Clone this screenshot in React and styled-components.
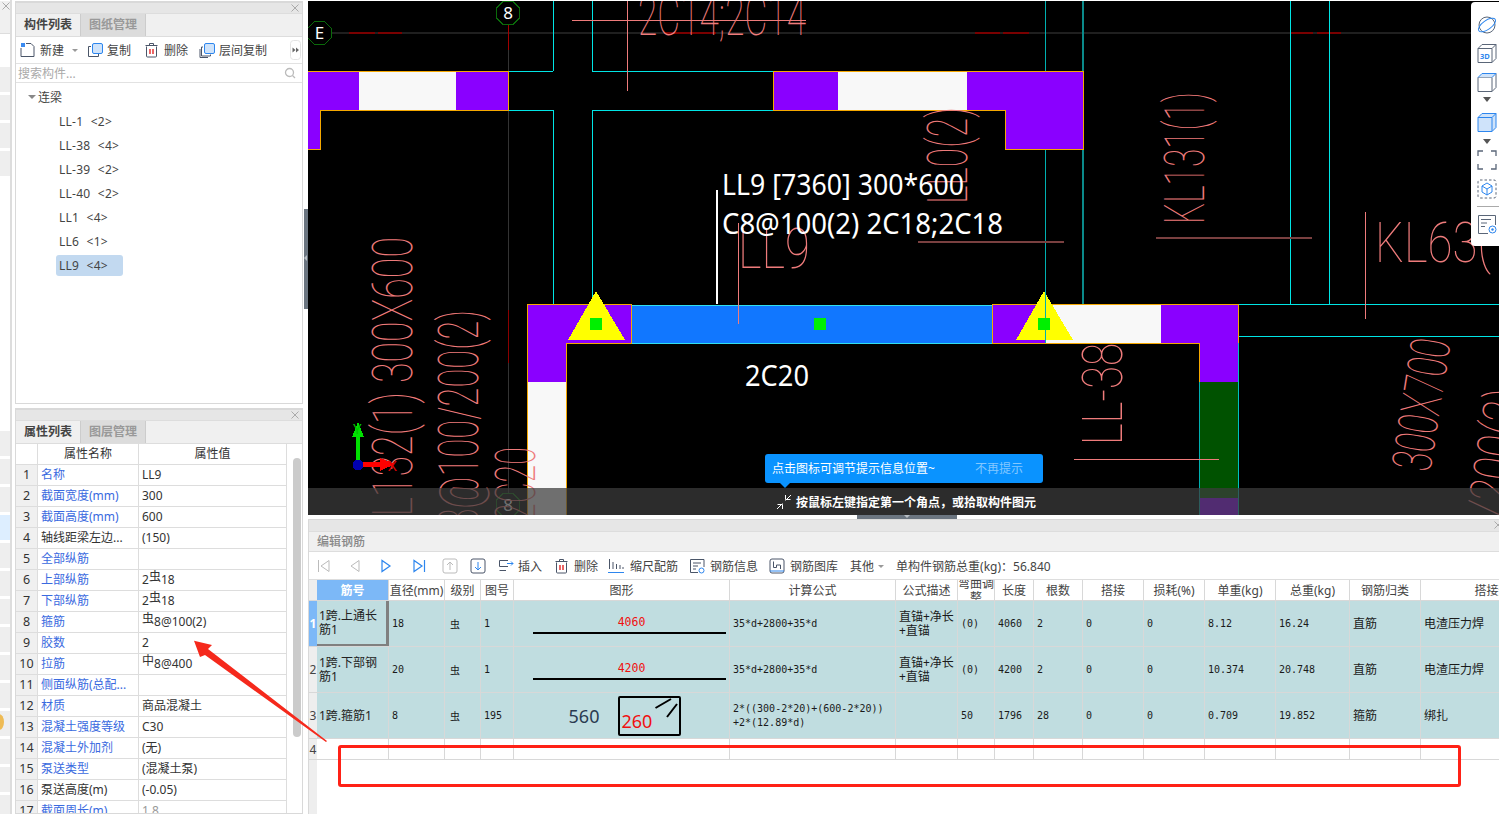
import React from 'react';
import styled, { createGlobalStyle } from 'styled-components';

const UI = '"Noto Sans", "Noto Sans CJK SC", sans-serif';
const MONO = '"DejaVu Sans Mono", "Noto Sans CJK SC", monospace';
const COLS = '8px 72px 56px 36px 33px 216px 166px 62px 37px 39px 49px 61px 61px 71px 74px 71px 156px';

const Global = createGlobalStyle`
  html, body { margin: 0; padding: 0; background: #fff; overflow: hidden; }
  * { box-sizing: border-box; }
`;

const Page = styled.div`
  width: 1499px;
  height: 814px;
  display: flex;
  position: relative;
  overflow: hidden;
  font-family: ${UI};
  font-size: 12px;
  color: #333;
  background: #fff;
`;

// slice of the neighbouring panel on the far left
const Strip = styled.div`
  width: 15px;
  flex: none;
  padding-right: 3px;
  display: flex;
  flex-direction: column;
`;
const StripInner = styled.div`
  flex: 1;
  border-right: 2px solid #ddd;
  overflow: hidden;
`;
const StripHead = styled.div`
  height: 33px;
  margin-top: 1px;
  background: #f0f0f0;
  border-bottom: 1px solid #ddd;
  position: relative;
  margin-bottom: 33px;
`;
const StripRow = styled.div`
  height: 25px;
  margin-bottom: 3px;
  position: relative;
  background: ${p => (p.$on ? '#ddeeff' : '#eeeeee')};
`;
const StripGap = styled.div`
  height: ${p => p.$h}px;
`;
const StripDot = styled.div`
  position: absolute;
  left: -6px;
  top: 3px;
  width: 10px;
  height: 16px;
  border-radius: 50%;
  background: #eebb55;
`;

const Side = styled.div`
  width: 289px;
  flex: none;
  display: flex;
  flex-direction: column;
  gap: 4px;
`;
const Panel = styled.div`
  border: 1px solid #d9d9d9;
  border-top-width: 2px;
  display: flex;
  flex-direction: column;
  height: ${p => p.$h}px;
  margin-top: ${p => p.$mt || 0}px;
  margin-right: 1px;
  overflow: hidden;
  background: #fff;
`;
const PanelGrip = styled.div`
  height: 10px;
  flex: none;
  background: #e6e6e6;
  position: relative;
`;
const CloseSvg = styled.svg`
  position: absolute;
  right: ${p => p.$right}px;
  top: 1px;
  width: 8px;
  height: 8px;
`;
const TabRow = styled.div`
  height: 24px;
  flex: none;
  display: flex;
  background: #f0f0f0;
  border-top: 1px solid #ddd;
  border-bottom: 1px solid #ddd;
`;
const Tab = styled.div`
  width: 65px;
  text-align: center;
  font-weight: 700;
  line-height: 22px;
  color: ${p => (p.$on ? '#444' : '#999')};
  background: ${p => (p.$on ? '#f0f0f0' : '#dcdcdc')};
  border-right: 1px solid #ccc;
`;
const ToolRow = styled.div`
  height: 27px;
  flex: none;
  display: flex;
  align-items: center;
  padding-left: 4px;
  gap: 4px;
  border-bottom: 1px solid #e2e2e2;
  position: relative;
  white-space: nowrap;
`;
const ToolLabel = styled.span`
  margin-right: ${p => p.$mr || 0}px;
  color: #444;
`;
const TinyCaret = styled.span`
  width: 0;
  height: 0;
  border: 3px solid transparent;
  border-top: 3px solid #999;
  margin: 3px ${p => p.$mr || 0}px 0 4px;
`;
const MoreBtn = styled.svg`
  position: absolute;
  right: 1px;
  top: 3px;
  width: 11px;
  height: 20px;
`;
const Search = styled.div`
  height: 19px;
  flex: none;
  display: flex;
  align-items: center;
  justify-content: space-between;
  padding: 0 6px 0 2px;
  color: #aaa;
  border-bottom: 1px solid #e2e2e2;
`;
const Tree = styled.div`
  flex: 1;
  padding-top: 2px;
`;
const TreeRow = styled.div`
  height: 24px;
  display: flex;
  align-items: center;
  padding-left: ${p => p.$indent}px;
  color: #444;
`;
const TreeCaret = styled.span`
  width: 0;
  height: 0;
  border: 4px solid transparent;
  border-top: 4px solid #888;
  margin: 4px 2px 0 0;
`;
const TreeItem = styled.span`
  padding: 0 10px 0 3px;
  height: 21px;
  line-height: 21px;
  min-width: 67px;
  border-radius: 3px;
  word-spacing: 4px;
  letter-spacing: 0.25px;
  font-size: 12px;
  background: ${p => (p.$on ? '#c2d9f0' : 'transparent')};
`;

const PropWrap = styled.div`
  flex: 1;
  display: flex;
  overflow: hidden;
`;
const PropTable = styled.div`
  width: 271px;
  flex: none;
`;
const PropRow = styled.div`
  display: grid;
  grid-template-columns: 22px 101px 148px;
  height: 21px;
  border-bottom: 1px solid #ddd;
  border-right: 1px solid #ddd;
  line-height: 20px;
`;
const PropNum = styled.div`
  background: #f0f0f0;
  text-align: center;
  border-right: 1px solid #ddd;
  font-size: 12.5px;
`;
const PropName = styled.div`
  padding-left: 3px;
  border-right: 1px solid #ddd;
  white-space: nowrap;
  overflow: hidden;
  color: ${p => (p.$blue ? '#3a6ae0' : '#333')};
`;
const PropVal = styled.div`
  padding-left: 3px;
  white-space: nowrap;
  color: ${p => (p.$muted ? '#999' : '#333')};
`;
const PropHead = styled.div`
  text-align: center;
  border-right: 1px solid #ddd;
`;
const Sym = styled.span`
  font-size: 12px;
  position: relative;
  top: -3px;
`;
const ScrollThumb = styled.div`
  width: 8px;
  height: 279px;
  margin: 14px 0 0 6px;
  border-radius: 4px;
  background: #cbcbcb;
`;

const Gutter = styled.div`
  width: 4px;
  flex: none;
  padding-top: 209px;
`;
const GutterHandle = styled.div`
  height: 100px;
  background: #6b7580;
  position: relative;
  &::after {
    content: '';
    position: absolute;
    left: 0;
    top: 46px;
    border: 3px solid transparent;
    border-right: 3px solid #b8bec4;
    border-left: 0;
  }
`;

const Main = styled.div`
  flex: 1;
  min-width: 0;
  display: flex;
  flex-direction: column;
`;
const Canvas = styled.div`
  height: 514px;
  margin-top: 1px;
  flex: none;
  position: relative;
  background: #000;
  overflow: hidden;
`;
const CanvasSvg = styled.svg`
  display: block;
  width: 1191px;
  height: 514px;
  shape-rendering: crispEdges;
`;
const Cad = styled.text`
  font-family: Roboto, "Liberation Sans", sans-serif;
  font-weight: 100;
  fill: #ee7b7b;
`;
const Note = styled.text`
  font-family: "Noto Sans", sans-serif;
  fill: #fff;
  font-size: 29px;
`;
const AxisLabel = styled.text`
  font-family: "Noto Sans", sans-serif;
  font-size: 15px;
`;
const Hint = styled.div`
  position: absolute;
  left: 457px;
  top: 453px;
  width: 278px;
  height: 29px;
  padding: 0 0 0 7px;
  border-radius: 3px;
  background: #0a93ff;
  color: #fff;
  line-height: 29px;
  display: flex;
  justify-content: space-between;
  &::after {
    content: '';
    position: absolute;
    left: 15px;
    top: 29px;
    border: 5px solid transparent;
    border-top: 5px solid #0a93ff;
    border-bottom: 0;
  }
`;
const HintOff = styled.span`
  width: 68px;
  color: #84c8ff;
`;
const StatusBar = styled.div`
  position: absolute;
  left: 0;
  right: 0;
  bottom: 0;
  height: 27px;
  background: rgba(60, 60, 60, 0.73);
  color: #fff;
  font-weight: 700;
  display: flex;
  align-items: center;
  padding-left: 468px;
  gap: 4px;
`;
const SideTools = styled.div`
  position: absolute;
  right: 0;
  top: 1px;
  width: 28px;
  height: 244px;
  background: #fff;
  border-radius: 4px 0 0 4px;
  display: flex;
  flex-direction: column;
  align-items: flex-start;
  padding: 13px 0 0 6px;
`;
const SideCaret = styled.span`
  width: 0;
  height: 0;
  margin: ${p => p.$mt}px 0 ${p => p.$mb}px 6px;
  border: 4px solid transparent;
  border-top: 5px solid #555;
  border-bottom: 0;
`;
const SideRule = styled.div`
  width: 22px;
  height: 1px;
  margin: 7px 0;
  background: #aaa;
`;
const SideIcon = styled.svg`
  width: 20px;
  height: 20px;
  margin-bottom: ${p => p.$mb || 0}px;
  fill: none;
  flex: none;
`;

const SplitBar = styled.div`
  height: 4px;
  flex: none;
  padding-left: 549px;
`;
const SplitHandle = styled.div`
  width: 100px;
  height: 4px;
  background: #6b7580;
  position: relative;
  &::after {
    content: '';
    position: absolute;
    left: 47px;
    top: 0;
    border: 3px solid transparent;
    border-top: 3px solid #b8bec4;
    border-bottom: 0;
  }
`;
const Editor = styled.div`
  flex: 1;
  display: flex;
  flex-direction: column;
  border-top: 1px solid #d9d9d9;
  border-left: 1px solid #d9d9d9;
  overflow: hidden;
`;
const EditorGrip = styled.div`
  height: 11px;
  flex: none;
  background: #e6e6e6;
  position: relative;
`;
const EditorTitle = styled.div`
  height: 21px;
  flex: none;
  background: #f0f0f0;
  border-top: 1px solid #ddd;
  border-bottom: 1px solid #ddd;
  line-height: 20px;
  padding-left: 8px;
  color: #888;
  font-weight: 500;
`;
const EditorTools = styled.div`
  height: 28px;
  flex: none;
  display: flex;
  align-items: center;
  padding: 1px 0 0 7px;
  white-space: nowrap;
  border-bottom: 1px solid #ddd;
  color: #444;
`;
const EdIcon = styled.svg`
  width: ${p => p.$w || 16}px;
  height: 16px;
  margin-right: ${p => p.$mr || 0}px;
  fill: none;
  flex: none;
`;
const EdLabel = styled.span`
  margin: 0 ${p => p.$mr || 0}px 0 ${p => p.$ml || 0}px;
`;
const Rebar = styled.div`
  flex: 1;
  display: flex;
  flex-direction: column;
  width: 1268px;
`;
const GridRow = styled.div`
  display: grid;
  grid-template-columns: ${COLS};
  height: ${p => p.$h}px;
  flex: none;
  background: ${p => p.$bg || '#fff'};
  border-bottom: 1px solid #d8d8d8;
`;
const HeadCell = styled.div`
  display: flex;
  align-items: center;
  justify-content: center;
  text-align: center;
  overflow: hidden;
  padding-top: 2px;
  line-height: 14px;
  border-right: 1px solid #d8d8d8;
  color: ${p => (p.$active ? '#fff' : '#444')};
  background: ${p => (p.$active ? '#7cb8f7' : 'transparent')};
  font-weight: ${p => (p.$active ? 700 : 400)};
`;
const NumCell = styled.div`
  background: ${p => (p.$on ? '#7cb8f7' : '#eeeeee')};
  color: ${p => (p.$on ? '#fff' : '#444')};
  font-weight: ${p => (p.$on ? 700 : 400)};
  display: flex;
  align-items: center;
  justify-content: center;
  overflow: hidden;
  font-size: 12px;
`;
const NameCell = styled.div`
  padding: 0 6px 0 2px;
  display: flex;
  align-items: center;
  line-height: 14px;
  color: #222;
  border-right: ${p => (p.$on ? '3px solid #808080' : '1px solid #d8d8d8')};
  border-bottom: ${p => (p.$on ? '2px solid #808080' : 'none')};
`;
const DataCell = styled.div`
  display: flex;
  align-items: center;
  padding-left: 3px;
  overflow: hidden;
  white-space: ${p => (p.$wrap ? 'pre-line' : 'nowrap')};
  line-height: 14px;
  font-family: ${p => (p.$ui ? UI : MONO)};
  font-size: ${p => (p.$ui ? 12 : 10)}px;
  color: #1a1a1a;
  border-right: 1px solid #d8d8d8;
`;
const GradeCell = styled.div`
  display: flex;
  align-items: center;
  padding-left: 5px;
  font-size: 10px;
  color: #1a1a1a;
  border-right: 1px solid #d8d8d8;
`;
const ShapeCell = styled.div`
  border-right: 1px solid #d8d8d8;
  display: flex;
  flex-direction: column;
  align-items: center;
  justify-content: center;
  font-family: ${MONO};
`;
const BarLabel = styled.div`
  color: #f01010;
  font-size: 11.5px;
  line-height: 14px;
  padding-top: 2px;
  height: 16px;
  margin-left: 20px;
`;
const BarLine = styled.div`
  width: 193px;
  height: 2px;
  margin: 3px 0 0 15px;
  background: #000;
`;
const StirrupRow = styled.div`
  display: flex;
  align-items: center;
  gap: 19px;
  margin-left: 7px;
`;
const StirrupSide = styled.span`
  font-family: ${UI};
  font-size: 18px;
  color: #2a3a50;
`;
const StirrupBox = styled.div`
  width: 63px;
  height: 40px;
  border: 2px solid #000;
  border-radius: 2px;
  position: relative;
  font-family: ${UI};
  font-size: 18px;
  color: #f01010;
  line-height: 20px;
  padding: 13px 0 0 1px;
`;
const StirrupHook = styled.svg`
  position: absolute;
  right: 1px;
  top: 0;
  width: 30px;
  height: 24px;
`;
const GutterFill = styled.div`
  flex: 1;
  width: 8px;
  background: #eeeeee;
`;

// red annotations someone drew over the screenshot
const MarkBox = styled.div`
  position: absolute;
  left: 338px;
  top: 745px;
  width: 1123px;
  height: 42px;
  border: 3px solid #ff2116;
  border-radius: 3px;
`;
const MarkArrow = styled.svg`
  position: absolute;
  left: 180px;
  top: 630px;
  width: 160px;
  height: 120px;
`;

const rectFill = [
  ['#8a00ff', 0, 70, 51, 39], ['#f8f8f8', 51, 70, 97, 39], ['#8a00ff', 148, 70, 52, 39], ['#8a00ff', 0, 109, 12, 39],
  ['#8a00ff', 465, 70, 65, 39], ['#f8f8f8', 530, 70, 129, 39], ['#8a00ff', 659, 70, 116, 39], ['#8a00ff', 697, 109, 78, 39],
  ['#8a00ff', 219, 303, 104, 39], ['#8a00ff', 219, 342, 39, 39], ['#f8f8f8', 219, 381, 39, 133],
  ['#8a00ff', 684, 303, 53, 39], ['#f8f8f8', 737, 303, 116, 39], ['#8a00ff', 853, 303, 77, 39], ['#8a00ff', 891, 342, 39, 39],
  ['#005200', 891, 381, 39, 116], ['#8a00ff', 891, 497, 39, 17]
];
const outlines = [
  '-2,70 200,70 200,109 12,109 12,148 -2,148',
  '465,70 775,70 775,148 697,148 697,109 465,109',
  '219,514 219,303 323,303 323,342 258,342 258,514',
  '684,342 684,303 930,303 930,514 891,514 891,342'
];
const cyanLines = [
  [245, 0, 245, 70], [284, 0, 284, 70], [245, 109, 245, 304], [284, 109, 284, 304],
  [200, 70, 245, 70], [284, 70, 465, 70], [200, 109, 245, 109], [284, 109, 465, 109],
  [982, 0, 982, 303], [1021, 0, 1021, 303], [931, 303, 1191, 303], [931, 335, 1191, 335]
];
const pinkLines = [
  [264, 19, 498, 19], [319, 0, 319, 90], [430, 222, 430, 323], [1057, 211, 1057, 318],
  [766, 458, 911, 458], [730, 241, 756, 241]
];
const brownLines = [[610, 241, 756, 241], [848, 237, 1004, 237]];
const redDashes = [[41, 67], [70, 94], [356, 408], [667, 692], [695, 721], [982, 1005], [1009, 1033]];

function CadLabel({ x, y, angle = 0, size = 55, len, children }) {
  return (
    <Cad
      transform={`translate(${x} ${y}) rotate(${angle})`}
      fontSize={size}
      textLength={len}
      lengthAdjust="spacingAndGlyphs"
    >
      {children}
    </Cad>
  );
}

function AxisMark({ cx, cy, label, color = '#fff' }) {
  const pts = [];
  for (let i = 0; i < 8; i++) {
    const a = (Math.PI / 4) * i + Math.PI / 8;
    pts.push(`${cx + 12.5 * Math.cos(a)},${cy + 12.5 * Math.sin(a)}`);
  }
  return (
    <g>
      <polygon points={pts.join(' ')} fill="#000" stroke="#0a6a0a" strokeWidth="1" />
      <text x={cx} y={cy + 6} textAnchor="middle" fontFamily="Noto Sans, sans-serif" fontSize="17" fill={color}>
        {label}
      </text>
    </g>
  );
}

function Drawing() {
  return (
    <CanvasSvg viewBox="0 0 1191 514">
      <line x1="23" y1="32" x2="1191" y2="32" stroke="#1f1f1f" strokeWidth="2" />
      {redDashes.map(([a, b]) => (
        <line key={a} x1={a} y1="32" x2={b} y2="32" stroke="#7a0000" strokeWidth="2" />
      ))}
      <line x1="200" y1="49" x2="200" y2="514" stroke="#333" />
      <line x1="200" y1="24" x2="200" y2="49" stroke="#a00000" />
      <line x1="200" y1="309" x2="200" y2="362" stroke="#8a0000" />
      {cyanLines.map(([x1, y1, x2, y2], i) => (
        <line key={i} x1={x1} y1={y1} x2={x2} y2={y2} stroke="#00e5e5" />
      ))}
      <line x1="737" y1="0" x2="737" y2="70" stroke="#00b0b0" />
      <line x1="737" y1="148" x2="737" y2="304" stroke="#00b0b0" />
      <line x1="775" y1="0" x2="775" y2="70" stroke="#0a8a8a" strokeWidth="2" />
      <line x1="775" y1="148" x2="775" y2="304" stroke="#0a8a8a" strokeWidth="2" />

      {rectFill.map(([c, x, y, w, h], i) => (
        <rect key={i} fill={c} x={x} y={y} width={w} height={h} />
      ))}
      <rect x="323" y="304" width="361" height="38" fill="#1177ff" stroke="#30e0f0" />
      {outlines.map(p => (
        <polygon key={p} points={p} fill="none" stroke="#f5a800" />
      ))}
      <line x1="930" y1="342" x2="930" y2="514" stroke="#00c0c0" />
      <line x1="891" y1="381" x2="891" y2="514" stroke="#00b0b0" />

      <AxisMark cx={11.5} cy={32} label="E" />
      <AxisMark cx={200} cy={12} label="8" />
      <AxisMark cx={200} cy={504} label="8" />

      {pinkLines.map(([x1, y1, x2, y2], i) => (
        <line key={i} x1={x1} y1={y1} x2={x2} y2={y2} stroke="#ee7b7b" />
      ))}
      {brownLines.map(([x1, y1, x2, y2]) => (
        <line key={x1} x1={x1} y1={y1} x2={x2} y2={y2} stroke="#7a4040" strokeWidth="2" />
      ))}

      <CadLabel x={330} y={34} len={168}>2C14;2C14</CadLabel>
      <CadLabel x={104} y={535} angle={-90} len={299}>LL132(1) 300X600</CadLabel>
      <CadLabel x={170} y={549} angle={-90} len={240}>C8@100/200(2)</CadLabel>
      <CadLabel x={227} y={520} angle={-90} len={74}>2C20</CadLabel>
      <CadLabel x={430} y={267} len={72}>LL9</CadLabel>
      <CadLabel x={659} y={203} angle={-90} len={97}>LL0(2)</CadLabel>
      <CadLabel x={896} y={223} angle={-90} len={132}>KL131(1)</CadLabel>
      <CadLabel x={814} y={444} angle={-90} len={102}>LL-38</CadLabel>
      <CadLabel x={1067} y={261} len={155}>KL63(1)</CadLabel>
      <CadLabel x={1122} y={472} angle={-81} len={133}>300X700</CadLabel>
      <CadLabel x={1197} y={519} angle={-81} len={130}>/200(2)</CadLabel>

      <polygon points="288,290 260,339 317,339" fill="#ffff00" />
      <polygon points="736,290 708,339 765,339" fill="#ffff00" />
      <line x1="737" y1="290" x2="737" y2="342" stroke="#00b0b0" />
      <rect x="282" y="317" width="12" height="12" fill="#00f000" />
      <rect x="506" y="317" width="12" height="12" fill="#00f000" />
      <rect x="730" y="317" width="12" height="12" fill="#00f000" />

      <line x1="409" y1="189" x2="409" y2="303" stroke="#fff" strokeWidth="2" />
      <Note x="414" y="194" textLength="242" lengthAdjust="spacingAndGlyphs">LL9 [7360] 300*600</Note>
      <Note x="414" y="233" textLength="281" lengthAdjust="spacingAndGlyphs">C8@100(2) 2C18;2C18</Note>
      <Note x="437" y="385" textLength="64" lengthAdjust="spacingAndGlyphs">2C20</Note>

      <rect x="48" y="435" width="4" height="24" fill="#00e000" />
      <polygon points="50,421 44,436 56,436" fill="#00e000" />
      <AxisLabel x="45" y="433" fill="#00c000" fontSize="12">Y</AxisLabel>
      <rect x="54" y="461" width="20" height="5" fill="#ff0000" />
      <polygon points="87,463 72,457 72,470" fill="#ff0000" />
      <AxisLabel x="80" y="470" fill="#e00000">X</AxisLabel>
      <circle cx="50" cy="464" r="5.5" fill="#0000b0" />
    </CanvasSvg>
  );
}

const CloseIcon = ({ right = 3 }) => (
  <CloseSvg viewBox="0 0 8 8" $right={right}>
    <path d="M0.5 0.5l7 7M7.5 0.5l-7 7" stroke="#aaa" fill="none" />
  </CloseSvg>
);
const NewIcon = () => (
  <EdIcon viewBox="0 0 16 16" $w={16}>
    <rect x="1" y="1" width="4" height="4" fill="#3b8bf0" />
    <path d="M1 6v8.5h13V4.5L11 1.5H6" stroke="#4a5568" />
  </EdIcon>
);
const CopyIcon = () => (
  <EdIcon viewBox="0 0 16 16">
    <rect x="5.5" y="1.5" width="10" height="10" rx="1.5" fill="#cfe3fa" stroke="#2d86ee" />
    <path d="M4 4.5H1.5v10h10V12" stroke="#4a5568" />
  </EdIcon>
);
const TrashIcon = () => (
  <EdIcon viewBox="0 0 16 16">
    <path d="M2.5 4.5v9.5a1 1 0 0 0 1 1h8a1 1 0 0 0 1-1V4.5M1.5 3.5h12M5.5 3V1.5h4V3" stroke="#4a5568" />
    <path d="M6 7v5M9 7v5" stroke="#e01515" strokeWidth="1.3" />
  </EdIcon>
);
const FloorCopyIcon = () => (
  <EdIcon viewBox="0 0 16 16">
    <rect x="5.5" y="1.5" width="10" height="10" rx="1.5" fill="#cfe3fa" stroke="#2d86ee" />
    <path d="M4 5H2.5v9h9v-1.5M1 7v8.5h8" stroke="#4a5568" />
  </EdIcon>
);
const GlassIcon = () => (
  <EdIcon viewBox="0 0 12 12" $w={12}>
    <circle cx="5.5" cy="5.5" r="4" stroke="#bbb" strokeWidth="1.3" />
    <path d="M8.5 8.5L11 11" stroke="#bbb" strokeWidth="1.3" />
  </EdIcon>
);

const SideIcons = () => (
  <SideTools>
    <SideIcon viewBox="0 0 20 20" $mb={8}>
      <circle cx="10" cy="10" r="8" stroke="#5a6678" />
      <ellipse cx="10" cy="10" rx="10" ry="4.5" transform="rotate(-35 10 10)" stroke="#2d86ee" />
    </SideIcon>
    <SideIcon viewBox="0 0 20 20" $mb={9}>
      <path d="M1 5.5L5 1.5h14v14l-4 4H1zM1 5.5h14v14M15 5.5l4-4" stroke="#5a6678" />
      <text x="3" y="16" fontSize="7.5" fontWeight="700" fontFamily="Noto Sans, sans-serif" fill="#2d86ee">3D</text>
    </SideIcon>
    <SideIcon viewBox="0 0 20 20">
      <path d="M1 19.5v-14h14v14zM15 19.5l4-4v-14" stroke="#5a6678" />
      <path d="M1 5.5l4-4h14l-4 4" fill="#cfe3fa" stroke="#2d86ee" />
    </SideIcon>
    <SideCaret $mt={5} $mb={10} />
    <SideIcon viewBox="0 0 20 20">
      <path d="M1 5.5l4-4h14v14l-4 4H1z" fill="#cfe3fa" stroke="#2d86ee" />
      <path d="M1 5.5h14v14M15 5.5l4-4" stroke="#2d86ee" />
    </SideIcon>
    <SideCaret $mt={7} $mb={6} />
    <SideIcon viewBox="0 0 20 20" $mb={9}>
      <path d="M1 6V1h5M14 1h5v5M19 14v5h-5M6 19H1v-5" stroke="#5a6678" strokeWidth="1.3" />
    </SideIcon>
    <SideIcon viewBox="0 0 20 20">
      <rect x="1" y="1" width="18" height="18" rx="2" stroke="#5a6678" strokeDasharray="2.5 2" />
      <path d="M10 4l5 3v6l-5 3-5-3V7zM5 7l5 3 5-3M10 10v6" stroke="#2d86ee" />
    </SideIcon>
    <SideRule />
    <SideIcon viewBox="0 0 20 20">
      <path d="M18.5 11V1.5h-17v18H11" stroke="#5a6678" />
      <path d="M4 5.5h10M4 9h6M4 12.5h4" stroke="#5a6678" />
      <circle cx="15.5" cy="15.5" r="3.5" stroke="#2d86ee" />
      <circle cx="15.5" cy="15.5" r="1.2" fill="#2d86ee" />
    </SideIcon>
  </SideTools>
);

const C = () => <Sym>虫</Sym>;
const Z = () => <Sym>中</Sym>;

const props = [
  ['名称', 'LL9', 1], ['截面宽度(mm)', '300', 1], ['截面高度(mm)', '600', 1], ['轴线距梁左边...', '(150)', 0],
  ['全部纵筋', '', 1], ['上部纵筋', <>2<C />18</>, 1], ['下部纵筋', <>2<C />18</>, 1], ['箍筋', <><C />8@100(2)</>, 1],
  ['胶数', '2', 1], ['拉筋', <><Z />8@400</>, 1], ['侧面纵筋(总配...', '', 1], ['材质', '商品混凝土', 1],
  ['混凝土强度等级', 'C30', 1], ['混凝土外加剂', '(无)', 1], ['泵送类型', '(混凝土泵)', 1], ['泵送高度(m)', '(-0.05)', 0],
  ['截面周长(m)', '1.8', 1]
];
const treeItems = ['LL-1 <2>', 'LL-38 <4>', 'LL-39 <2>', 'LL-40 <2>', 'LL1 <4>', 'LL6 <1>', 'LL9 <4>'];
const heads = ['直径(mm)', '级别', '图号', '图形', '计算公式', '公式描述', '弯曲调整', '长度', '根数', '搭接', '损耗(%)', '单重(kg)', '总重(kg)', '钢筋归类', '搭接形式'];

const Straight = ({ n }) => (
  <ShapeCell>
    <BarLabel>{n}</BarLabel>
    <BarLine />
  </ShapeCell>
);
const Stirrup = () => (
  <ShapeCell>
    <StirrupRow>
      <StirrupSide>560</StirrupSide>
      <StirrupBox>
        260
        <StirrupHook viewBox="0 0 30 24">
          <path d="M7.5 10L23 1M19 19L29 6" stroke="#000" strokeWidth="2" fill="none" />
        </StirrupHook>
      </StirrupBox>
    </StirrupRow>
  </ShapeCell>
);

const rows = [
  { name: '1跨.上通长筋1', dia: '18', fig: '1', shape: <Straight n="4060" />, formula: '35*d+2800+35*d', desc: '直锚+净长+直锚', bend: '(0)', len: '4060', cnt: '2', unit: '8.12', total: '16.24', kind: '直筋', join: '电渣压力焊' },
  { name: '1跨.下部钢筋1', dia: '20', fig: '1', shape: <Straight n="4200" />, formula: '35*d+2800+35*d', desc: '直锚+净长+直锚', bend: '(0)', len: '4200', cnt: '2', unit: '10.374', total: '20.748', kind: '直筋', join: '电渣压力焊' },
  { name: '1跨.箍筋1', dia: '8', fig: '195', shape: <Stirrup />, formula: '2*((300-2*20)+(600-2*20))\n+2*(12.89*d)', desc: '', bend: '50', len: '1796', cnt: '28', unit: '0.709', total: '19.852', kind: '箍筋', join: '绑扎' }
];

export default function App() {
  return (
    <Page>
      <Global />
      <Strip>
        <StripInner>
          <StripHead><CloseIcon right={0} /></StripHead>
          {[0, 1, 2, 3].map(i => <StripRow key={i} />)}
          <StripGap $h={252} />
          {[0, 1, 2].map(i => <StripRow key={i} />)}
          <StripRow $on />
          {Array.from({ length: 11 }).map((_, i) => (
            <StripRow key={i}>{i === 6 && <StripDot />}</StripRow>
          ))}
        </StripInner>
      </Strip>

      <Side>
        <Panel $h={403} $mt={1}>
          <PanelGrip><CloseIcon /></PanelGrip>
          <TabRow>
            <Tab $on>构件列表</Tab>
            <Tab>图纸管理</Tab>
          </TabRow>
          <ToolRow>
            <NewIcon />
            <ToolLabel>新建</ToolLabel>
            <TinyCaret $mr={5} />
            <CopyIcon />
            <ToolLabel $mr={9}>复制</ToolLabel>
            <TrashIcon />
            <ToolLabel $mr={7}>删除</ToolLabel>
            <FloorCopyIcon />
            <ToolLabel>层间复制</ToolLabel>
            <MoreBtn viewBox="0 0 11 20">
              <rect x="0.5" y="0.5" width="10" height="19" rx="3" fill="#fff" stroke="#e4e4e4" />
              <path d="M2.5 7.5l3 2.5-3 2.5zM6 7.5l3 2.5-3 2.5z" fill="#666" />
            </MoreBtn>
          </ToolRow>
          <Search>
            搜索构件...
            <GlassIcon />
          </Search>
          <Tree>
            <TreeRow $indent={12}>
              <TreeCaret />
              连梁
            </TreeRow>
            {treeItems.map(t => (
              <TreeRow key={t} $indent={40}>
                <TreeItem $on={t === 'LL9 <4>'}>{t}</TreeItem>
              </TreeRow>
            ))}
          </Tree>
        </Panel>

        <Panel $h={406}>
          <PanelGrip><CloseIcon /></PanelGrip>
          <TabRow>
            <Tab $on>属性列表</Tab>
            <Tab>图层管理</Tab>
          </TabRow>
          <PropWrap>
            <PropTable>
              <PropRow>
                <PropHead />
                <PropHead>属性名称</PropHead>
                <PropHead>属性值</PropHead>
              </PropRow>
              {props.map(([name, val, blue], i) => (
                <PropRow key={name}>
                  <PropNum>{i + 1}</PropNum>
                  <PropName $blue={blue}>{name}</PropName>
                  <PropVal $muted={i === 16}>{val}</PropVal>
                </PropRow>
              ))}
            </PropTable>
            <ScrollThumb />
          </PropWrap>
        </Panel>
      </Side>

      <Gutter><GutterHandle /></Gutter>

      <Main>
        <Canvas>
          <Drawing />
          <Hint>
            点击图标可调节提示信息位置~
            <HintOff>不再提示</HintOff>
          </Hint>
          <StatusBar>
            <EdIcon viewBox="0 0 16 16">
              <path d="M1 15l5.5-5.5M1.5 10.5h5v4.5M15 1L9.5 6.5M14.5 5.5h-5V1" stroke="#fff" />
            </EdIcon>
            按鼠标左键指定第一个角点，或拾取构件图元
          </StatusBar>
          <SideIcons />
        </Canvas>
        <SplitBar><SplitHandle /></SplitBar>
        <Editor>
          <EditorGrip><CloseIcon right={-3} /></EditorGrip>
          <EditorTitle>编辑钢筋</EditorTitle>
          <EditorTools>
            <EdIcon viewBox="0 0 16 16" $mr={15}><path d="M2.5 2v12M13 2.5v11L5 8z" stroke="#bbb" /></EdIcon>
            <EdIcon viewBox="0 0 16 16" $mr={15}><path d="M12 2.5v11L4 8z" stroke="#bbb" /></EdIcon>
            <EdIcon viewBox="0 0 16 16" $mr={17}><path d="M4 2.5v11L12 8z" stroke="#2d86ee" strokeWidth="1.2" /></EdIcon>
            <EdIcon viewBox="0 0 16 16" $mr={15}><path d="M13.5 2v12M3 2.5v11L11 8z" stroke="#2d86ee" strokeWidth="1.2" /></EdIcon>
            <EdIcon viewBox="0 0 16 16" $mr={12}>
              <rect x="1" y="1" width="14" height="14" rx="2" stroke="#bbb" />
              <path d="M8 12V4M5 7l3-3 3 3" stroke="#bbb" />
            </EdIcon>
            <EdIcon viewBox="0 0 16 16" $mr={12}>
              <rect x="1" y="1" width="14" height="14" rx="2" stroke="#4a5568" />
              <path d="M8 4v8M5 9l3 3 3-3" stroke="#2d86ee" />
            </EdIcon>
            <EdIcon viewBox="0 0 16 16" $mr={4}>
              <path d="M10 2.5H1.5v6H10M1.5 12.5H8" stroke="#4a5568" />
              <path d="M9 5.5h6M13 3.5l2 2-2 2" stroke="#2d86ee" />
            </EdIcon>
            <EdLabel $mr={12}>插入</EdLabel>
            <TrashIcon />
            <EdLabel $mr={10} $ml={4}>删除</EdLabel>
            <EdIcon viewBox="0 0 16 16" $mr={6}>
              <path d="M1.5 1v10M5 4v7M8.5 6v5M12 7v4M15 9v2" stroke="#4a5568" />
              <path d="M0 14.5h16" stroke="#2d86ee" />
            </EdIcon>
            <EdLabel $mr={11}>缩尺配筋</EdLabel>
            <EdIcon viewBox="0 0 16 16" $mr={5}>
              <path d="M15 9V1.5H1.5v13H9" stroke="#4a5568" />
              <path d="M4 5h8M4 8h5M4 11h3" stroke="#4a5568" />
              <circle cx="12.5" cy="12.5" r="2.5" stroke="#2d86ee" />
            </EdIcon>
            <EdLabel $mr={11}>钢筋信息</EdLabel>
            <EdIcon viewBox="0 0 16 16" $mr={5}>
              <rect x="1" y="1" width="14" height="14" rx="2" stroke="#4a5568" />
              <path d="M4.5 3.5v6h3V7h4v4" stroke="#4a5568" />
              <path d="M1 13h14" stroke="#2d86ee" />
            </EdIcon>
            <EdLabel $mr={12}>钢筋图库</EdLabel>
            <EdLabel>其他</EdLabel>
            <TinyCaret $mr={12} />
            <EdLabel>单构件钢筋总重(kg)：56.840</EdLabel>
          </EditorTools>
          <Rebar>
            <GridRow $h={21}>
              <NumCell />
              <HeadCell $active>筋号</HeadCell>
              {heads.map(h => <HeadCell key={h}>{h}</HeadCell>)}
            </GridRow>
            {rows.map((r, i) => (
              <GridRow key={r.name} $h={46} $bg="#c0dde0">
                <NumCell $on={i === 0}>{i + 1}</NumCell>
                <NameCell $on={i === 0}>{r.name}</NameCell>
                <DataCell>{r.dia}</DataCell>
                <GradeCell>虫</GradeCell>
                <DataCell>{r.fig}</DataCell>
                {r.shape}
                <DataCell $wrap>{r.formula}</DataCell>
                <DataCell $ui $wrap>{r.desc}</DataCell>
                <DataCell>{r.bend}</DataCell>
                <DataCell>{r.len}</DataCell>
                <DataCell>{r.cnt}</DataCell>
                <DataCell>0</DataCell>
                <DataCell>0</DataCell>
                <DataCell>{r.unit}</DataCell>
                <DataCell>{r.total}</DataCell>
                <DataCell $ui>{r.kind}</DataCell>
                <DataCell $ui>{r.join}</DataCell>
              </GridRow>
            ))}
            <GridRow $h={21}>
              <NumCell>4</NumCell>
              {Array.from({ length: 16 }).map((_, i) => <DataCell key={i} />)}
            </GridRow>
            <GutterFill />
          </Rebar>
        </Editor>
      </Main>

      <MarkBox />
      <MarkArrow viewBox="0 0 160 120">
        <polygon points="14,10.7 32,15 28,19 147,111 146,112 25,25 20,27" fill="#f5291c" />
      </MarkArrow>
    </Page>
  );
}
